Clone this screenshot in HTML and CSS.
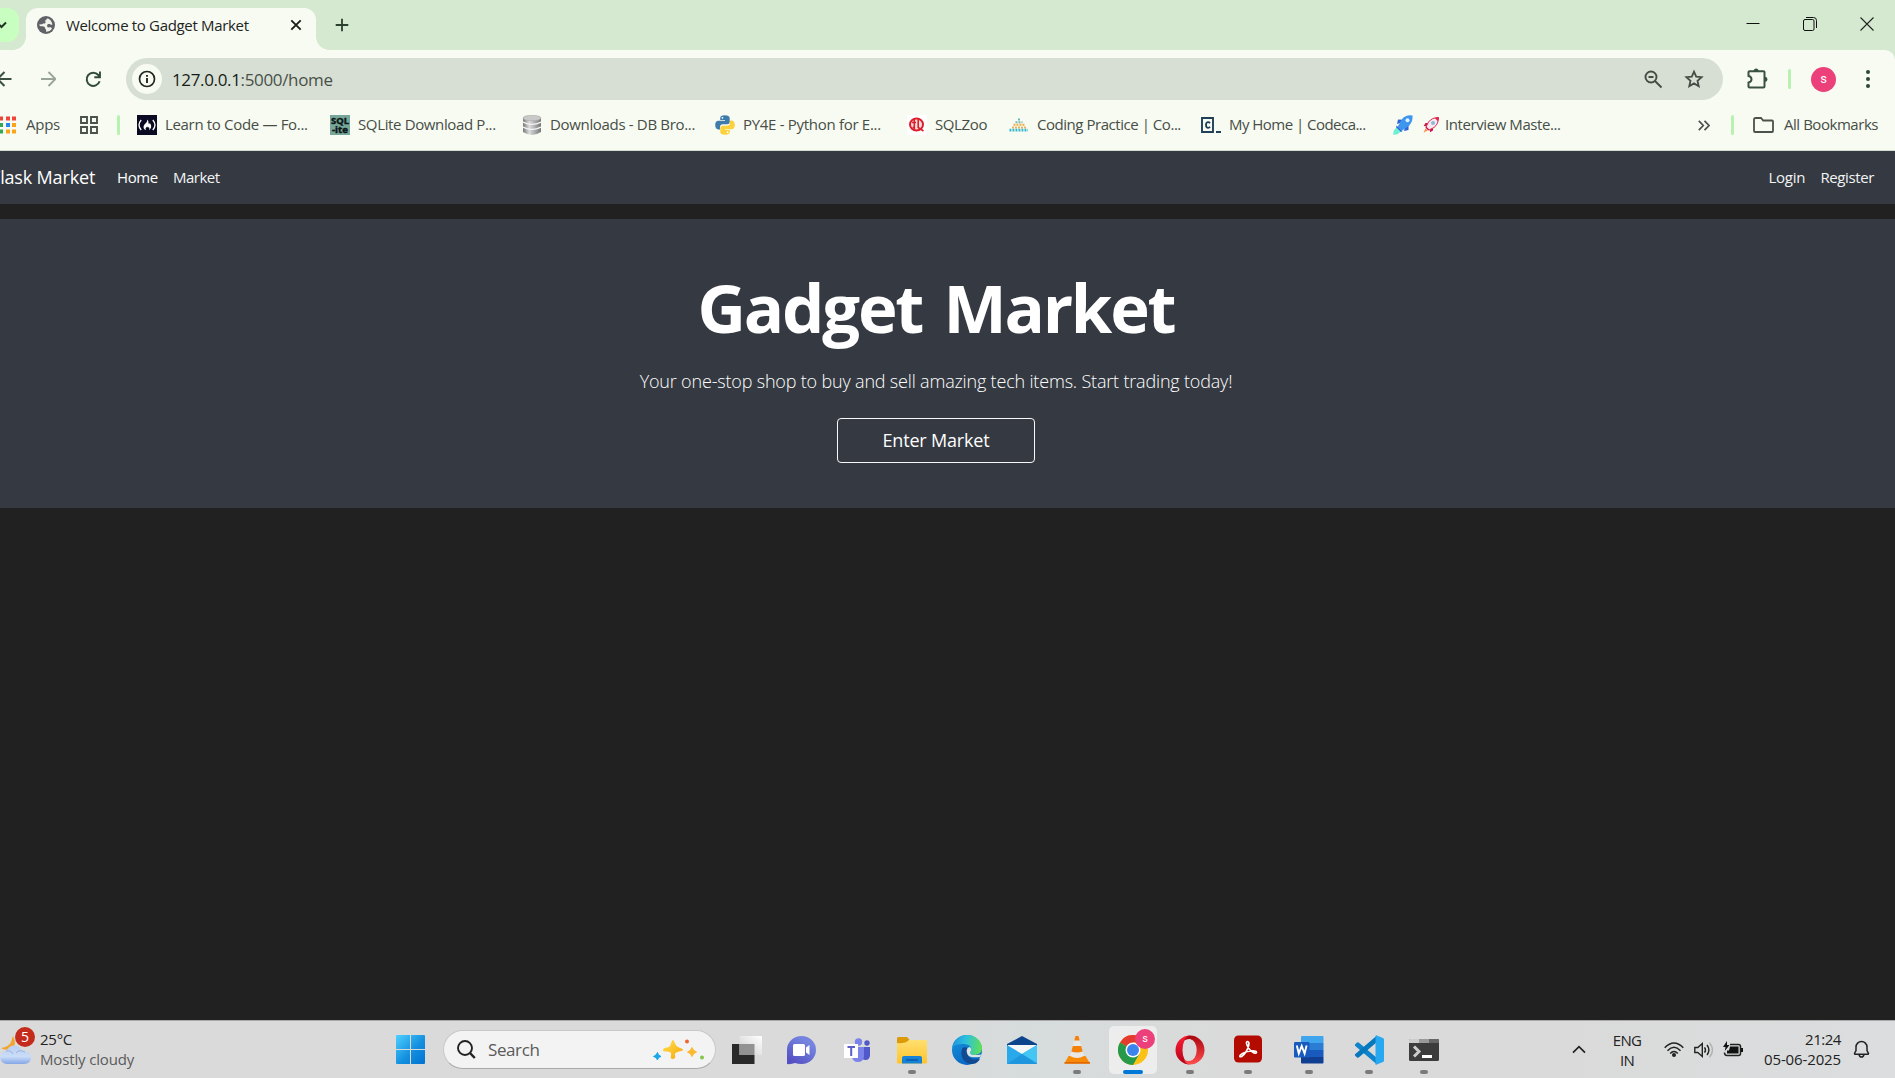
FILE: index.html
```html
<!DOCTYPE html>
<html lang="en">
<head>
<meta charset="utf-8">
<title>Welcome to Gadget Market</title>
<link rel="stylesheet" href="styles.css">
</head>
<body>
<header class="browser">
  <div class="tabstrip">
    <div class="tab-search"><svg width="19" height="34" viewBox="0 0 19 34"><path d="M-3 14.500l4.500 4.500 4.500-4.500" fill="none" stroke="#1f3322" stroke-width="2"/></svg></div>
    <div class="tab">
      <svg class="globe" width="18" height="18" viewBox="0 0 18 18"><circle cx="9" cy="9" r="9" fill="#5f6368"/><path d="M10.500 2.200c-.3 1.400-1.800 1.300-2.200 2.300-.3.900.8 1.500 0 2.500-.9 1-2.500.2-3.200 1.300l-3 .2c.2 1.300 1.500 1.800 2.700 1.800 1.700 0 3.300.5 3.300 2 0 1 1 1 1 1.900v1.500c2.300 0 4.500-1 5.800-3-.3-1.600-2-1.500-3.300-1.300-1.200.1-1.600-1-1.500-2 .1-1.100 1.300-1.500 2.500-1.400.8.1 1.300.9 2.800.7-.3-2.800-2.200-5.400-4.900-6.500z" fill="#f0f3ec"/></svg>
      <span class="tab-title">Welcome to Gadget Market</span>
      <svg class="tab-close" width="12" height="12" viewBox="0 0 12 12"><path d="M1.300 1.300l9.400 9.400M10.700 1.300L1.300 10.700" stroke="#1b1f1b" stroke-width="1.900"/></svg>
    </div>
    <svg class="new-tab" width="14" height="14" viewBox="0 0 14 14"><path d="M7 .7v12.600M.7 7h12.600" stroke="#2b4130" stroke-width="1.800"/></svg>
    <div class="window-controls">
      <svg width="14" height="14" viewBox="0 0 14 14"><path d="M.5 6.500h13" stroke="#111"/></svg>
      <svg width="14" height="14" viewBox="0 0 14 14"><g fill="none" stroke="#111"><rect x=".5" y="2.500" width="10.500" height="11" rx="1.500"/><path d="M3 .5h7.500a3 3 0 0 1 3 3V11"/></g></svg>
      <svg width="14" height="14" viewBox="0 0 14 14"><path d="M.5.5l13 13M13.500.5l-13 13" stroke="#222" stroke-width="1.100"/></svg>
    </div>
  </div>

  <div class="toolbar">
    <svg class="nav-back" width="12" height="16" viewBox="0 0 12 16"><path d="M11.500 8H-2M4.500 1L-2.500 8l7 7" fill="none" stroke="#3a5140" stroke-width="2"/></svg>
    <svg class="nav-forward" width="15" height="16" viewBox="0 0 15 16"><path d="M0 8h13.500M7.500 1l7 7-7 7" fill="none" stroke="#9aa39a" stroke-width="1.900"/></svg>
    <svg class="nav-reload" width="17" height="17" viewBox="0 0 17 17"><path d="M14.600 10.300A6.600 6.600 0 1 1 13.300 4L15 6" fill="none" stroke="#324a38" stroke-width="2"/><path d="M15.900 .5v6.700H9.300v-1.900h4.700V.5z" fill="#324a38"/></svg>
    <div class="omnibox">
      <div class="site-info"><svg width="18" height="18" viewBox="0 0 18 18"><circle cx="9" cy="9" r="7.500" fill="none" stroke="#202620" stroke-width="1.700"/><path d="M9 8v5M9 5v1.800" stroke="#202620" stroke-width="1.900"/></svg></div>
      <div class="url"><span class="host">127.0.0.1</span>:5000/home</div>
      <svg class="zoom-icon" width="19" height="19" viewBox="0 0 19 19"><g fill="none" stroke="#454c45" stroke-width="1.900"><circle cx="7" cy="7" r="5.500"/><path d="M11 11l6.500 6.500M4.500 7h5"/></g></svg>
      <svg class="star" width="20" height="20" viewBox="0 0 20 20"><path d="M10 2.700l2.200 5 5.400.5-4.100 3.600 1.200 5.400-4.700-2.800-4.700 2.800 1.200-5.400-4.100-3.600 5.400-.5z" fill="none" stroke="#454c45" stroke-width="1.800"/></svg>
    </div>
    <svg class="puzzle" width="21" height="22" viewBox="0 0 21 22"><path d="M2.500 3.200h14a1 1 0 0 1 1 1v14.300a1 1 0 0 1-1 1h-14a1 1 0 0 1-1-1v-4q3-.5 3-3.200T1.500 8V4.200a1 1 0 0 1 1-1z" fill="none" stroke="#3a5140" stroke-width="2"/><path d="M6.700 3a2.500 2.500 0 0 1 5 0zM18 8.800a2.500 2.500 0 0 1 0 5z" fill="#3a5140"/></svg>
    <i class="divider"></i>
    <span class="avatar">s</span>
    <svg class="menu-dots" width="4" height="18" viewBox="0 0 4 18"><g fill="#2f4635"><circle cx="2" cy="2" r="2"/><circle cx="2" cy="9" r="2"/><circle cx="2" cy="16" r="2"/></g></svg>
  </div>

  <nav class="bookmarks">
    <a class="bookmark apps"><svg width="16" height="18" viewBox="0 0 16 18"><path d="M-1 .5h4v4h-4zM6 .5h4v4H6zM12 .5h4v4h-4z" fill="#f04438"/><path d="M-1 7h4v4h-4z" fill="#34a853"/><path d="M6 7h4v4H6z" fill="#2886f0"/><path d="M12 7h4v4h-4z" fill="#f9a41a"/><path d="M-1 13.500h4v4h-4z" fill="#34a853"/><path d="M6 13.500h4v4H6zM12 13.500h4v4h-4z" fill="#fba51b"/></svg><span>Apps</span></a>
    <svg width="18" height="18" viewBox="0 0 18 18"><g fill="none" stroke="#4b514b" stroke-width="1.900"><path d="M1 1h6v6H1zM11 1h6v6h-6zM1 11h6v6H1zM11 11h6v6h-6z"/></g></svg>
    <i class="divider"></i>
    <a class="bookmark learn"><svg width="20" height="20" viewBox="0 0 20 20"><path d="M0 0h20v20H0z" fill="#0a0a23"/><path d="M4.200 5Q-.2 10 4.200 15M15.800 5q4.400 5 0 10" fill="none" stroke="#fff" stroke-width="1.300"/><path d="M10 4.500c2.500 2 .8 3.300 2 4.300.7.400.8-.8.700-1 2 2.600 2.200 5.500-.7 7.400 1-2 .2-2.600-.5-3.300-.3 1-1 .5-1.300-.5-1.600 1.600-2.400 2.300-1 3.900-3.400-1.300-3.200-4.500-1-6.500C9.600 7.500 10.700 6 10 4.500z" fill="#fff"/></svg><span>Learn to Code — Fo...</span></a>
    <a class="bookmark sqlite"><svg width="20" height="20" viewBox="0 0 20 20"><path d="M0 0h20v20H0z" fill="#76a79a"/><text x="1" y="8.500" textLength="18" lengthAdjust="spacingAndGlyphs" class="ico-sql">SQL</text><text x="2" y="18" textLength="16" lengthAdjust="spacingAndGlyphs" class="ico-sql">-ite</text></svg><span>SQLite Download P...</span></a>
    <a class="bookmark downloads"><svg width="20" height="20" viewBox="0 0 20 20"><defs><linearGradient id="db"><stop stop-color="#777"/><stop offset=".35" stop-color="#ddd"/><stop offset="1" stop-color="#777"/></linearGradient></defs><path d="M1 3v14q9 6 18 0V3z" fill="url(#db)"/><ellipse cx="10" cy="3" rx="9" ry="2.700" fill="#c9c9c9" stroke="#aaa" stroke-width=".6"/><path d="M1 7.200q9 4.500 18 0M1 12.200q9 4.500 18 0" stroke="#f4f4f4" stroke-width="1.300" fill="none"/></svg><span>Downloads - DB Bro...</span></a>
    <a class="bookmark py4e"><svg width="20" height="20" viewBox="0 0 20 20"><path d="M9.800.2C6.500.2 5.200 1.400 5.200 3v2H10v.8H3.300C1.300 5.800.2 7.400.2 10s1.300 4.400 3 4.400H5V12c0-1.700 1.300-2.700 2.800-2.700h4.600c1.200 0 2.300-1 2.300-2.300V3C14.700 1.300 13 .2 9.800.2z" fill="#3f7cac"/><path d="M10.200 19.800c3.300 0 4.600-1.200 4.600-2.800v-2H10v-.8h6.700c2 0 3.100-1.600 3.100-4.200s-1.300-4.400-3-4.400H15V8c0 1.700-1.300 2.700-2.800 2.700H7.600c-1.200 0-2.300 1-2.300 2.300v4c0 1.700 1.700 2.800 4.900 2.800z" fill="#fdd13a"/><circle cx="7.400" cy="2.800" r=".9" fill="#fff"/><circle cx="12.600" cy="17.200" r=".9" fill="#fff"/></svg><span>PY4E - Python for E...</span></a>
    <a class="bookmark sqlzoo"><svg width="20" height="20" viewBox="0 0 20 20"><path d="M0 0h20v20H0z" fill="#fff"/><ellipse cx="9.500" cy="9.500" rx="6.500" ry="6" fill="#fbdcdc" stroke="#dc1f2b" stroke-width="2"/><path d="M7.300 4v11M11.200 4v8.500l5.300 3.500M5 7.500h4M5.500 12.500H8" stroke="#dc1f2b" stroke-width="1.600" fill="none"/></svg><span>SQLZoo</span></a>
    <a class="bookmark coding"><svg width="20" height="20" viewBox="0 0 20 20"><g fill="none" stroke-width="1.900" stroke-dasharray="1.900 1.100"><path d="M9 4.500h2" stroke="#57b5bb"/><path d="M6.500 7.200h7" stroke="#72b8b0"/><path d="M4.500 9.800h11" stroke="#eaa844"/><path d="M3 12.500h14" stroke="#e5b25b"/><path d="M.5 15.200h18.500" stroke="#35b8cc" stroke-width="2.700"/></g></svg><span>Coding Practice | Co...</span></a>
    <a class="bookmark codeca"><svg width="20" height="20" viewBox="0 0 20 20"><path d="M1 3h11v14H1zM15 17h5" fill="none" stroke="#1f4056" stroke-width="1.900"/><path d="M9 8.200Q8.200 7 6.800 7.200 5 7.500 5 10t1.800 2.800Q8.200 13 9 11.800" fill="none" stroke="#1f4056" stroke-width="1.800"/></svg><span>My Home | Codeca...</span></a>
    <a class="bookmark interview"><svg width="20" height="20" viewBox="0 0 20 20"><path d="M5 4.500l5 .2L7 8 4 9zM15.500 10v5l-4.500 1 1-4z" fill="#2f63d6"/><path d="M19.500.5Q12-.5 8.500 5L4.500 12l4 4L15 11.500Q20 8 19.500.5z" fill="#3f96ef"/><path d="M3.500 10.500l6 6-3 .5L3 13.500z" fill="#2f63d6"/><circle cx="14.500" cy="5.300" r="2" fill="#dff2ff"/><path d="M3.500 12.500l4 4Q5 20 .3 19.700 0 15 3.500 12.500z" fill="#6df0d3"/></svg><svg class="emoji-rocket" width="16" height="16" viewBox="0 0 16 16"><path d="M5 6H2.500L.7 9l3 .3zM10 11v2.500l-3 1.800-.3-3z" fill="#c9184a"/><path d="M15.500.5Q9 .5 5.500 5L3 10l3 3 5-2.500Q15.500 7 15.500.5z" fill="#f5eaf0" stroke="#d92753" stroke-width="1"/><path d="M15.700.3l-4 .8 3.200 3.200z" fill="#e0224e"/><circle cx="10" cy="6" r="2" fill="#8fb8dc"/><path d="M3.200 9.500l3.300 3.300-1.300.8-2.800-2.800z" fill="#d3194a"/><path d="M2.500 11.500l2 2L.5 15.700z" fill="#ff8b3d"/></svg><span>Interview Maste...</span></a>
    <div class="bookmarks-end">
      <svg width="12" height="11" viewBox="0 0 12 11"><path d="M.8.8l4.500 4.700-4.500 4.700M6.500.8L11 5.500l-4.500 4.700" fill="none" stroke="#4b514b" stroke-width="1.700"/></svg>
      <i class="divider"></i>
      <svg width="21" height="16" viewBox="0 0 21 16"><path d="M1 2.500A1.500 1.500 0 0 1 2.500 1H8l2.200 2.500H19a1 1 0 0 1 1 1V14a1 1 0 0 1-1 1H2a1 1 0 0 1-1-1z" fill="none" stroke="#4b514b" stroke-width="1.800"/></svg>
      <span>All Bookmarks</span>
    </div>
  </nav>
</header>

<main class="page">
  <nav class="navbar">
    <a class="brand">Flask Market</a>
    <a class="nav-link home">Home</a>
    <a class="nav-link market">Market</a>
    <a class="nav-link login">Login</a>
    <a class="nav-link register">Register</a>
  </nav>
  <section class="hero">
    <h1>Gadget Market</h1>
    <p>Your one-stop shop to buy and sell amazing tech items. Start trading today!</p>
    <a class="enter">Enter Market</a>
  </section>
</main>

<footer class="taskbar">
  <div class="weather">
    <div class="weather-icon">
      <svg width="32" height="30" viewBox="0 0 32 30"><defs><linearGradient id="cl" x1="0" y1="0" x2="0" y2="1"><stop stop-color="#bcd0ef"/><stop offset=".6" stop-color="#c9dcf8"/><stop offset="1" stop-color="#84a6e6"/></linearGradient></defs><path d="M13 1q5 10-3 13-5 2-9-1 8-1 10-6z" fill="#f3a52b"/><path d="M7 29a6.500 6.500 0 0 1-.5-13Q9 10 15 10.500q5 .3 7 5.500 9 0 9 6.500T24 29z" fill="url(#cl)"/><path d="M6 16q5-1 7 3M16 18q3-4 9-1" fill="none" stroke="#96b2e2" stroke-width="1"/></svg>
      <span class="weather-badge">5</span>
    </div>
    <div class="weather-text"><span class="temp">25°C</span><span class="sky">Mostly cloudy</span></div>
  </div>

  <svg class="start" width="29" height="29" viewBox="0 0 29 29"><defs><linearGradient id="win" gradientUnits="userSpaceOnUse" x1="0" y1="0" x2="29" y2="29"><stop stop-color="#4fd0ff"/><stop offset=".55" stop-color="#1590df"/><stop offset="1" stop-color="#0072d2"/></linearGradient></defs><path d="M1 0h13v14H0V1a1 1 0 0 1 1-1zM15 0h13a1 1 0 0 1 1 1v13H15zM0 15h14v14H1a1 1 0 0 1-1-1zM15 15h14v13a1 1 0 0 1-1 1H15z" fill="url(#win)"/></svg>

  <div class="search">
    <svg width="19" height="19" viewBox="0 0 19 19"><circle cx="8" cy="8" r="7" fill="none" stroke="#222" stroke-width="1.900"/><path d="M13 13l4.800 5" stroke="#222" stroke-width="2.500"/></svg>
    <span>Search</span>
    <svg class="sparkles" width="52" height="22" viewBox="0 0 52 22"><defs><linearGradient id="sp" x1="0" y1="0" x2="1" y2="1"><stop stop-color="#ffe04d"/><stop offset="1" stop-color="#f7a609"/></linearGradient></defs><path d="M20 1q1 0 2 3.500 1 3 4 4t4 2-4 2-4 4-2 3.500-2-3.500-4-4-4-2 4-2 4-4T20 1z" fill="url(#sp)"/><path d="M39 8.500q1 3.500 4.500 4.500-3.500 1-4.500 4.500-1-3.500-4.500-4.500 3.500-1 4.500-4.500z" fill="#fbb82a" stroke="#fbb82a"/><path d="M4.500 13.500l1 2.500 2.500 1.500-2.500 1-1 2.500-1.500-2.500-2.500-1 2.500-1.500z" fill="#16a8ea" stroke="#16a8ea"/><circle cx="34" cy="2.500" r="2" fill="#f26430"/><circle cx="49" cy="18.500" r="2" fill="#84c64b"/></svg>
  </div>

  <div class="dock">
    <div class="app"><svg width="30" height="30" viewBox="0 0 30 30"><defs><linearGradient id="tv" x1="0" y1="1" x2="1" y2="0"><stop stop-color="#ccc"/><stop offset="1" stop-color="#fff"/></linearGradient></defs><path d="M0 9h22.500v20H0z" fill="#292929"/><path d="M7.500 1H30v19H7.500z" fill="url(#tv)"/><path d="M7.500 9h15v11h-15z" fill="#929292"/></svg></div>
    <div class="app"><svg width="30" height="30" viewBox="0 0 30 30"><defs><linearGradient id="ch" x1="1" y1="0" x2=".3" y2="1"><stop stop-color="#7d83dc"/><stop offset=".3" stop-color="#7484de"/><stop offset="1" stop-color="#5551c4"/></linearGradient></defs><path d="M1 29V15A14.500 14 0 1 1 15.500 29Q12 29 9 28q-4 1.500-8 1z" fill="url(#ch)"/><rect x="7" y="9" width="12" height="12" rx="1.500" fill="#fff"/><path d="M20 12.500l3.500-2.500v10L20 17.500z" fill="#fff"/></svg></div>
    <div class="app"><svg width="30" height="30" viewBox="0 0 30 30"><circle cx="16.500" cy="7" r="3.700" fill="#7b83eb"/><circle cx="25" cy="8" r="2.700" fill="#5059c9"/><path d="M20 12h8v9q-1 4-4 4-5 0-5-5z" fill="#5059c9"/><path d="M10 12h12v10q-1 5-6 5t-6-5z" fill="#7b83eb"/><path d="M2 9h14v14H2z" fill="#fff"/><path d="M5.500 12h7.500M9.200 12v9" stroke="#5b5fc7" stroke-width="2"/></svg></div>
    <div class="app running"><svg width="30" height="30" viewBox="0 0 30 30"><defs><linearGradient id="fo" x1="0" y1="0" x2="0" y2="1"><stop stop-color="#ffdf70"/><stop offset="1" stop-color="#ffc42b"/></linearGradient></defs><path d="M0 3.500Q0 2 1.500 2h8q1 0 2 1.500l1 1.500H30v8H0z" fill="#dc9a08"/><path d="M0 8q8 1 12-3h18v22.500q0 1-1 1H1q-1 0-1-1z" fill="url(#fo)"/><path d="M5 28.500V23q0-2 2-2h16q2 0 2 2v5.500z" fill="#1583d8"/><path d="M9 25h12" stroke="#0a4f9c" stroke-width="1.300"/></svg></div>
    <div class="app"><svg width="30" height="30" viewBox="0 0 30 30"><defs><linearGradient id="e1" x1="0" x2="1" y1=".3" y2=".4"><stop stop-color="#1f91dc"/><stop offset=".45" stop-color="#2bc0df"/><stop offset="1" stop-color="#60df58"/></linearGradient><linearGradient id="e2" x1="0" y1="0" x2=".5" y2="1"><stop stop-color="#1797dc"/><stop offset="1" stop-color="#0a66c4"/></linearGradient></defs><circle cx="15" cy="15" r="15" fill="url(#e2)"/><path d="M0 13C1 5 7.500 0 15 0c9 0 15 6.500 15 13 0 5-4 7-7.500 7-3 0-5-1-4.500-2.500 2.500-3 1-8-5.500-8.500C7 8.700 2 10 0 13z" fill="url(#e1)"/><path d="M10.500 13c-3 6 0 16 10 16 4 0 7-3.500 7.500-5.500-4 2-11 1-12.500-4-1-3-.5-4.500.5-6-2-1.500-4-1.500-5.500-.5z" fill="#114a91"/><path d="M18 17.500c2-2.500 1-5-.5-5.500-3 1-3.200 4-2.300 6.500C16.500 22 20 23 28.200 22l1-2.500-4 .5c-4 .3-7.500-.5-7.200-2.500z" fill="#dce5e6"/></svg></div>
    <div class="app"><svg width="30" height="30" viewBox="0 0 30 30"><path d="M0 9L15 1l15 8v4H0z" fill="#0c458b"/><path d="M1 10h28v9l-14 2L1 19z" fill="#f5f7f8"/><path d="M0 10l15 9 15-9v19H0z" fill="#29a9ea"/><path d="M30 10L15 19l15 9z" fill="#45c5f3"/><path d="M0 29l15-10 15 10z" fill="#1789d5" opacity=".55"/></svg></div>
    <div class="app running"><svg width="30" height="30" viewBox="0 0 30 30"><path d="M6.500 21h17l4.500 7.500H2.500z" fill="#f88a08"/><path d="M13.500 1h3l5.500 20q-7 4-14 0z" fill="#e8e8e8"/><path d="M13.500 1h3l1.200 4.500h-5.400zM10.800 11h8.400l1.500 5.500q-5.700 2-11.400 0z" fill="#f47f09"/><path d="M2.500 27h25.500v1.700h-25.500z" fill="#e16905"/></svg></div>
    <div class="app active"><svg width="30" height="30" viewBox="0 0 30 30"><circle cx="15" cy="15" r="15" fill="#fbc116"/><path d="M15 15L2 7.500a15 15 0 0 1 26 0H15z" fill="#e33b2e"/><path d="M2 7.500a15 15 0 0 0 13 22.500l6.500-11.300L15 15z" fill="#26994a"/><circle cx="15" cy="15" r="7.500" fill="#fff"/><circle cx="15" cy="15" r="6" fill="#3b83ed"/></svg><span class="profile-badge">s</span></div>
    <div class="app running"><svg width="30" height="30" viewBox="0 0 30 30"><defs><linearGradient id="op" x1="0" y1="0" x2="0" y2="1"><stop stop-color="#ff1f35"/><stop offset="1" stop-color="#b30018"/></linearGradient><linearGradient id="op2" x1="0" y1="0" x2="0" y2="1"><stop stop-color="#a9050f"/><stop offset="1" stop-color="#ff4e4e"/></linearGradient></defs><path d="M15 .5a14.500 14.500 0 1 0 0 29Q7.500 26 7.500 15T15 .5z" fill="url(#op)"/><path d="M15 .5c-2 0-5 2-6 5q7-4 10 2 2.500 7.500 0 15-4 6-10 2 2 5 6 5a14.500 14.500 0 0 0 0-29z" fill="url(#op2)"/><ellipse cx="15" cy="15" rx="6.700" ry="10.500" fill="#dadada"/></svg></div>
    <div class="app running"><svg width="30" height="30" viewBox="0 0 30 30"><rect x="1" y=".5" width="28" height="27" rx="4.500" fill="#b30b00"/><path d="M14.500 6.500q2 0 1.200 4-1.700 7-7 11-2.500 1-1.700-1Q10 17 18 16q5-.5 5.500 1.300-.5 2-4-.3-4.500-3-6-8.500-.2-2 1-2z" fill="none" stroke="#fff" stroke-width="1.600"/></svg></div>
    <div class="app running"><svg width="30" height="30" viewBox="0 0 30 30"><path d="M8 1h20.500q1 0 1 1v6H7V2q0-1 1-1z" fill="#41a5ee"/><path d="M7 8h22.500v7H7z" fill="#2b7cd3"/><path d="M7 15h22.500v7H7z" fill="#185abd"/><path d="M7 22h22.500v5.500q0 1-1 1H8q-1 0-1-1z" fill="#103f91"/><rect y="7" width="15.500" height="15.500" rx="1.200" fill="#185abd"/><path d="M2.800 10.500l2 8 2.900-7.500 2.900 7.500 2-8" fill="none" stroke="#fff" stroke-width="1.900"/></svg></div>
    <div class="app running"><svg width="30" height="30" viewBox="0 0 30 30"><path d="M1 9.500l2-2q1-.5 2 .3L23 23v6.500L1.300 11q-.8-.7-.3-1.500z" fill="#0f83cc"/><path d="M1 20.500l2 2q1 .5 2-.3L23 7V.5L1.300 19q-.8.700-.3 1.500z" fill="#0678bd"/><path d="M22 .2L29 3q1 .5 1 1.500v21q0 1-1 1.500l-7 2.800q-1 0-.5-1.500V2Q21.500.5 22 .2z" fill="#29a8f2"/></svg></div>
    <div class="app running"><svg width="30" height="30" viewBox="0 0 30 30"><rect y="4" width="30" height="22" rx="1.500" fill="#3c3c3c"/><path d="M1 4h9v4H0V5q0-1 1-1z" fill="#ccc"/><path d="M10 4h10v4H10z" fill="#999"/><path d="M20 4h9q1 0 1 1v3H20z" fill="#666"/><path d="M5 11.500l5 5-5 5" fill="none" stroke="#ccc" stroke-width="3"/><path d="M13 21.500h10" stroke="#fff" stroke-width="3"/></svg></div>
  </div>

  <div class="tray">
    <svg class="chevron" width="14" height="9" viewBox="0 0 14 9"><path d="M1 7.700l6-6 6 6" fill="none" stroke="#222" stroke-width="1.700"/></svg>
    <div class="lang"><span>ENG</span><span>IN</span></div>
    <svg class="wifi" width="20" height="17" viewBox="0 0 20 17"><g fill="none" stroke="#222" stroke-width="1.500"><path d="M.7 6.700q9.300-9.500 18.600 0M3.500 9.700q6.500-6.800 13 0M6.200 12.400q3.800-4 7.600 0"/></g><circle cx="10" cy="14" r="2" fill="#222"/></svg>
    <svg class="volume" width="20" height="18" viewBox="0 0 20 18"><path d="M.8 6.500v5h3l4.500 4V2.500l-4.500 4z" fill="none" stroke="#222" stroke-width="1.400"/><path d="M10.500 6.300q2 2.700 0 5.400M13 4q3.800 5 0 10" fill="none" stroke="#222" stroke-width="1.400"/><path d="M15.500 1.700q6 7.300 0 14.600" fill="none" stroke="#b0b0b0" stroke-width="1.400"/></svg>
    <svg class="battery" width="20" height="17" viewBox="0 0 20 17"><path d="M7 3.500h8.500q2 0 2 2v7q0 2-2 2H4q-2.500 0-2.500-3" fill="none" stroke="#222" stroke-width="1.500"/><path d="M7 5.500h8.500v7H4V9.500h2zM18 7h2v4h-2zM4 0L0 6h2.500L1.800 10 6.500 4H4z" fill="#111"/></svg>
    <div class="clock"><span class="time">21:24</span><span class="date">05-06-2025</span></div>
    <svg class="bell" width="17" height="19" viewBox="0 0 17 19"><path d="M1.500 13.500L3 10.500V7a5.500 5.500 0 0 1 11 0v3.500l1.500 3q0 .8-.8.800H2.300q-.8 0-.8-.8zM6 14.500q.5 2.500 2.500 2.500t2.500-2.500" fill="none" stroke="#222" stroke-width="1.500"/></svg>
  </div>
</footer>
</body>
</html>
```
FILE: styles.css
```css
* { box-sizing: border-box; }

body {
  margin: 0;
  width: 1895px;
  height: 1078px;
  overflow: hidden;
  display: flex;
  flex-direction: column;
  background: #212121;
  font-family: "Open Sans", "Noto Sans", sans-serif;
  font-size: 15px;
  line-height: 20px;
  white-space: nowrap;
}

svg { display: block; flex: none; }
span, a { flex: none; }

/* Browser window */
.browser {
  flex: none;
  height: 151px;
  background: #d5e8d0;
  border-bottom: 1px solid #d3ddcf;
}

.tabstrip { height: 50px; display: flex; align-items: flex-start; }

.tab-search {
  width: 19px;
  height: 34px;
  margin-top: 8px;
  border-radius: 0 12px 12px 0;
  background: #c8ffc0;
}

.tab {
  position: relative;
  width: 290px;
  height: 42px;
  margin: 8px 0 0 7px;
  padding: 0 14px 8px 11px;
  display: flex;
  align-items: center;
  border-radius: 12px 12px 0 0;
  background: #f8fbf2;
}

.tab::before, .tab::after {
  content: "";
  position: absolute;
  bottom: 0;
  width: 13px;
  height: 13px;
}
.tab::before { left: -13px; background: radial-gradient(circle at 0 0, transparent 12.5px, #f8fbf2 13px); }
.tab::after { right: -13px; background: radial-gradient(circle at 100% 0, transparent 12.5px, #f8fbf2 13px); }

.tab-title { margin-left: 11px; color: #1d251e; letter-spacing: -.33px; }
.tab-close { margin-left: auto; }
.new-tab { margin: 18px 0 0 19px; }

.window-controls { display: flex; gap: 43px; margin: 17px 21px 0 auto; }

.toolbar {
  height: 50px;
  display: flex;
  align-items: center;
  padding: 8px 25px 0 0;
  background: #f8fbf2;
  border-top-right-radius: 10px;
}
.nav-forward { margin-left: 29px; }
.nav-reload { margin-left: 29px; }

.omnibox {
  width: 1597px;
  height: 42px;
  margin-left: 24px;
  padding: 0 19px 0 6px;
  display: flex;
  align-items: center;
  border-radius: 21px;
  background: #d7dfd4;
}
.site-info {
  width: 30px;
  height: 30px;
  display: grid;
  place-items: center;
  border-radius: 50%;
  background: #f8fbf2;
}
.url { margin-left: 10px; padding-top: 1px; font-size: 17px; letter-spacing: -.35px; color: #485048; }
.host { color: #161c16; }
.zoom-icon { margin-left: auto; }
.star { margin-left: 21px; }
.puzzle { margin-left: 24px; }

.divider {
  width: 3px;
  height: 20px;
  border-radius: 2px;
  background: #b7f2b0;
}
.toolbar .divider { margin-left: 20px; }

.avatar {
  width: 25px;
  height: 25px;
  margin-left: 20px;
  border-radius: 50%;
  background: #ec407a;
  color: #fff;
  font: 13px/24px Roboto, sans-serif;
  text-align: center;
}
.menu-dots { margin-left: auto; }

.bookmarks {
  height: 50px;
  display: grid;
  grid-template-columns: 80px 37px 20px 193px 192px 193px 192px 102px 192px 192px 192px 1fr;
  align-items: center;
  background: #f8fbf2;
  color: #464e47;
}
.bookmark { display: flex; align-items: center; gap: 8px; }
.bookmark span, .bookmarks-end span { padding-bottom: 2px; }
.apps { gap: 10px; letter-spacing: -.25px; }
.learn { letter-spacing: -.33px; }
.sqlite { letter-spacing: -.36px; }
.downloads { letter-spacing: -.33px; }
.py4e { letter-spacing: -.3px; }
.sqlzoo { letter-spacing: -.39px; }
.coding { letter-spacing: -.46px; }
.codeca { letter-spacing: -.53px; }
.interview { letter-spacing: -.42px; }
.emoji-rocket { margin: 0 -2px 0 2px; }
.ico-sql { font: bold 9px "Open Sans", sans-serif; letter-spacing: 0; fill: #0b1513; stroke: #0b1513; stroke-width: .4px; }

.bookmarks-end { display: flex; align-items: center; justify-content: flex-end; padding-right: 17px; }
.bookmarks-end .divider { margin: 0 19px 0 21px; }
.bookmarks-end span { margin-left: 10px; letter-spacing: -.46px; }

/* Web page */
.page { flex: 1; }

.navbar {
  height: 53px;
  display: flex;
  align-items: center;
  padding: 0 21px 2px 0;
  background: #353941;
  color: #f3f4f4;
}
.brand { width: 126px; margin-left: -9px; font-size: 18px; letter-spacing: -.16px; color: #fff; }
.nav-link { letter-spacing: -.38px; }
.home { color: #fff; width: 56px; }
.market { letter-spacing: -.5px; }
.login { margin-left: auto; letter-spacing: -.2px; }
.register { margin-left: 15px; }

.hero {
  height: 289px;
  margin-top: 15px;
  padding: 48px 23px 0 0;
  display: flex;
  flex-direction: column;
  align-items: center;
  background: #353941;
  color: #fff;
}
.hero h1 { margin: 0; font-size: 67px; line-height: 80px; font-weight: 700; letter-spacing: -2.2px; word-spacing: 6px; }
.hero p { margin: 21px 0 23px; font-size: 18px; line-height: 27px; font-weight: 330; letter-spacing: -.18px; }
.enter {
  width: 198px;
  height: 45px;
  border: 1px solid #f8f9fa;
  border-radius: 4px;
  font-size: 18px;
  line-height: 43px;
  text-align: center;
  letter-spacing: -.18px;
}

/* Taskbar */
.taskbar {
  flex: none;
  height: 58px;
  display: flex;
  align-items: center;
  border-top: 1px solid #aaa;
  background: linear-gradient(90deg, #dadada 0 50%, #d6dcdc 54%, #dadada 65% 82%, #dbddde);
  color: #222;
}

.weather { display: flex; width: 396px; }
.weather-icon { position: relative; width: 40px; height: 40px; padding-top: 6px; }
.weather-badge {
  position: absolute;
  left: 15px;
  top: -2px;
  width: 20px;
  height: 20px;
  border-radius: 50%;
  background: #c42b1c;
  color: #fff;
  font-size: 14px;
  text-align: center;
}
.weather-text, .lang, .clock { display: flex; flex-direction: column; padding-bottom: 2px; }
.temp { letter-spacing: -.25px; }
.sky { letter-spacing: -.15px; color: #5b5b5b; }

.search {
  width: 273px;
  height: 39px;
  margin-left: 18px;
  padding: 0 10px 0 13px;
  display: flex;
  align-items: center;
  border: 1px solid #c8c8c8;
  border-radius: 20px;
  border-bottom-color: #aaa;
  background: #f3f3f3;
}
.search span { margin-left: 12px; padding-top: 1px; font-size: 17px; letter-spacing: -.4px; color: #5a5a5a; }
.sparkles { margin-left: auto; }

.dock {
  display: grid;
  grid-template-columns: 54px 56px 55px 55px 55px 55px 56px 57px 58px 61px 60px 55px 48px;
  margin-left: 7px;
}
.app {
  position: relative;
  width: 48px;
  height: 48px;
  display: flex;
  justify-content: center;
  padding-top: 9px;
  border-radius: 5px;
}
.app.active { background: #ededed; }
.app.running::after, .app.active::after {
  content: "";
  position: absolute;
  bottom: 0;
  width: 8px;
  height: 4px;
  border-radius: 2px;
  background: #7b7b7b;
}
.app.active::after { width: 20px; background: #0078d7; }
.profile-badge {
  position: absolute;
  left: 26px;
  top: 3px;
  width: 20px;
  height: 20px;
  border-radius: 50%;
  background: #ec407a;
  color: #fff;
  font: 11px/19px Roboto, sans-serif;
  text-align: center;
}

.tray { display: flex; align-items: center; margin-left: auto; padding-right: 25px; }
.lang { width: 30px; margin: 3px 0 0 26px; align-items: center; letter-spacing: -.7px; }
.wifi { margin-left: 22px; }
.volume { margin-left: 10px; }
.battery { margin-left: 9px; }
.clock { margin-left: 21px; align-items: flex-end; }
.time { letter-spacing: -.45px; }
.date { letter-spacing: -.13px; }
.bell { margin-left: 12px; }
```
